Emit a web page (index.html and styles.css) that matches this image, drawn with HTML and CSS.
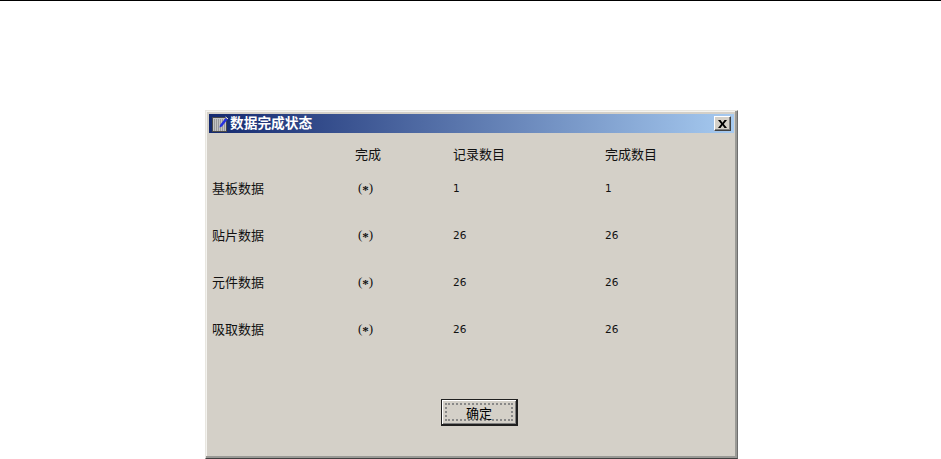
FILE: index.html
```html
<!DOCTYPE html>
<html lang="zh-CN">
<head>
<meta charset="utf-8">
<title>数据完成状态</title>
<link rel="stylesheet" href="styles.css">
</head>
<body>
<main class="dialog">
  <header class="titlebar">
    <svg class="app-icon" width="16" height="16" viewBox="0 0 16 16">
      <rect x="0.500" y="1.500" width="14" height="14" fill="#c4c4c4" stroke="#4a4a4a"/>
      <path d="M2 4h11M2 6h11M2 8h11M2 10h11M2 12h11M2 14h11" stroke="#6e6e6e" stroke-dasharray="1 1"/>
      <path d="M8 9l5.500-7 2 1.500-5.500 7-2.500 1z" fill="#2530e0"/>
      <path d="M13.500 1l2.500 2" stroke="#fff"/>
    </svg>
    <span class="title">数据完成状态</span>
    <button class="close" type="button" aria-label="关闭">
      <svg width="9" height="8" viewBox="0 0 9 8"><path d="M0 0h2.500L4.500 2.800 6.500 0H9L5.800 4 9 8H6.500L4.500 5.200 2.500 8H0l3.200-4z" fill="#000"/></svg>
    </button>
  </header>
  <section class="table">
    <div class="row head"><span></span><span>完成</span><span>记录数目</span><span>完成数目</span></div>
    <div class="row"><span>基板数据</span><span class="mark">(<span class="star">*</span>)</span><span class="num">1</span><span class="num">1</span></div>
    <div class="row"><span>贴片数据</span><span class="mark">(<span class="star">*</span>)</span><span class="num">26</span><span class="num">26</span></div>
    <div class="row"><span>元件数据</span><span class="mark">(<span class="star">*</span>)</span><span class="num">26</span><span class="num">26</span></div>
    <div class="row"><span>吸取数据</span><span class="mark">(<span class="star">*</span>)</span><span class="num">26</span><span class="num">26</span></div>
  </section>
  <footer class="actions">
    <button class="ok" type="button"><span class="ok-focus">确定</span></button>
  </footer>
</main>
</body>
</html>
```
FILE: styles.css
```css
html, body {
  margin: 0;
  padding: 0;
  background: #fff;
}
body {
  width: 941px;
  height: 459px;
  overflow: hidden;
  box-sizing: border-box;
  border-top: 1px solid #000;
  font-family: "Noto Sans CJK SC", "Liberation Sans", sans-serif;
  font-size: 13px;
  color: #111;
}
.dialog {
  box-sizing: border-box;
  width: 533px;
  height: 349px;
  margin: 109px 0 0 205px;
  padding: 3px 3px 2px 3px;
  background: #d4d0c8;
  border: 1px solid;
  border-color: #e8e6e0 #6e6e6e #404040 #e8e6e0;
  display: flex;
  flex-direction: column;
  box-shadow: inset -2px -2px 0 #9a9a96, inset 1px 1px 0 #f4f3ef;
}
.titlebar {
  height: 19px;
  flex: none;
  display: flex;
  align-items: center;
  padding: 0 3px 0 3px;
  background: linear-gradient(90deg, #14296f 0%, #a6caf0 100%);
}
.app-icon { flex: none; margin-right: 2px; }
.title {
  flex: 1;
  font-weight: 700;
  font-size: 13.7px;
  color: #fff;
  line-height: 17px;
  padding-bottom: 2px;
}
.close {
  box-sizing: border-box;
  width: 17px;
  height: 15px;
  padding: 0;
  display: flex;
  align-items: center;
  justify-content: center;
  background: #d4d0c8;
  border: 1px solid;
  border-color: #fff #404040 #404040 #fff;
  box-shadow: inset -1px -1px 0 #808080;
}
.table {
  flex: none;
  padding: 9px 0 0 3px;
}
.row {
  display: grid;
  grid-template-columns: 143px 98px 152px 1fr;
  height: 47px;
  line-height: 18px;
  padding-top: 5px;
  box-sizing: border-box;
}
.head {
  height: 32px;
  padding-top: 3px;
}
.mark {
  padding-left: 3px;
  font-family: "Liberation Serif", serif;
  font-size: 13px;
}
.star {
  font-weight: 700;
  vertical-align: -2px;
}
.num {
  font-family: "DejaVu Sans", sans-serif;
  font-size: 10.5px;
}
.actions {
  flex: none;
  margin-top: 37px;
  display: flex;
  padding-left: 232px;
}
.ok {
  box-sizing: border-box;
  width: 77px;
  height: 27px;
  padding: 3px;
  font: inherit;
  background: #d4d0c8;
  border: 2px solid #202020;
  border-top-width: 1px;
  border-left-width: 1px;
  box-shadow: inset 1px 1px 0 #fff, inset -1px -1px 0 #808080;
}
.ok-focus {
  display: block;
  height: 100%;
  box-sizing: border-box;
  border: 2px dotted #888;
  line-height: 15px;
  text-align: center;
  color: #000;
}
```
